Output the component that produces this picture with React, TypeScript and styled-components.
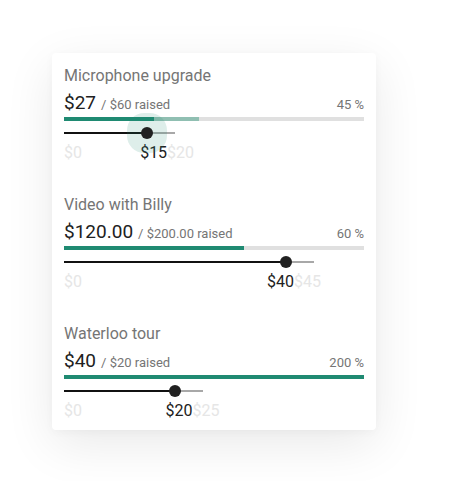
import React from "react";
import styled, { createGlobalStyle } from "styled-components";

type Goal = {
  title: string;
  raised: string;
  goal: string;
  percent: number;
  fill: number;
  buffer: number;
  value: number;
  max: number;
  focused?: boolean;
};

const goals: Goal[] = [
  { title: "Microphone upgrade", raised: "$27", goal: "$60", percent: 45, fill: 30, buffer: 45, value: 15, max: 20, focused: true },
  { title: "Video with Billy", raised: "$120.00", goal: "$200.00", percent: 60, fill: 60, buffer: 60, value: 40, max: 45 },
  { title: "Waterloo tour", raised: "$40", goal: "$20", percent: 200, fill: 100, buffer: 100, value: 20, max: 25 },
];

// px per dollar on the slider track
const SCALE = 300 / 54;

const GoalSection: React.FC<{ goal: Goal }> = ({ goal }) => {
  const trackWidth = goal.max * SCALE;
  const pos = (goal.value / goal.max) * 100;
  const labelLeft = goal.value * SCALE - goal.value * 0.48;

  return (
    <Section>
      <Title>{goal.title}</Title>
      <AmountRow>
        <span>
          <Amount>{goal.raised}</Amount>
          <Raised>/ {goal.goal} raised</Raised>
        </span>
        <Percent>{goal.percent} %</Percent>
      </AmountRow>
      <Progress>
        <ProgressBuffer style={{ width: `${goal.buffer}%` }} />
        <ProgressFill style={{ width: `${goal.fill}%` }} />
      </Progress>
      <SliderArea>
        <Track style={{ width: trackWidth }}>
          <TrackFill style={{ width: `${pos}%` }} />
          <Thumb style={{ left: `${pos}%` }} $focused={goal.focused} />
        </Track>
      </SliderArea>
      <LabelRow>
        <MinLabel>$0</MinLabel>
        <ValueLabel style={{ marginLeft: labelLeft }}>${goal.value}</ValueLabel>
        <MaxLabel>${goal.max}</MaxLabel>
      </LabelRow>
    </Section>
  );
};

export default function App() {
  return (
    <>
      <GlobalStyle />
      <Page>
        <Card>
          {goals.map((g) => (
            <GoalSection key={g.title} goal={g} />
          ))}
        </Card>
      </Page>
    </>
  );
}

// --- Styled Components ---
const GlobalStyle = createGlobalStyle`
  html, body {
    margin: 0;
    padding: 0;
    background: #ffffff;
    font-family: Roboto, "Liberation Sans", sans-serif;
  }
`;

const Page = styled.div`
  padding: 53px 0 0 52px;
  min-height: 481px;
  box-sizing: border-box;
`;

const Card = styled.div`
  width: 324px;
  box-sizing: border-box;
  padding: 13px 12px 9px;
  background: #fff;
  border-radius: 4px;
  box-shadow: 0 14px 50px rgba(0, 0, 0, 0.09), 0 2px 10px rgba(0, 0, 0, 0.03);
  display: flex;
  flex-direction: column;
  gap: 32px;
`;

const Section = styled.div`
  display: flex;
  flex-direction: column;
`;

const Title = styled.div`
  font-size: 16px;
  line-height: 20px;
  color: #757575;
`;

const AmountRow = styled.div`
  margin-top: 6px;
  height: 24px;
  display: flex;
  justify-content: space-between;
  align-items: baseline;
  font-size: 16px;
  line-height: 24px;
`;

const Amount = styled.span`
  font-size: 19px;
  line-height: 1;
  color: #212121;
`;

const Raised = styled.span`
  margin-left: 5px;
  font-size: 13px;
  line-height: 1;
  color: #757575;
`;

const Percent = styled.span`
  font-size: 13px;
  color: #757575;
`;

const Progress = styled.div`
  position: relative;
  margin-top: 1px;
  height: 4px;
  background: #e0e0e0;
  overflow: hidden;
`;

const ProgressBuffer = styled.div`
  position: absolute;
  inset: 0 auto 0 0;
  background: #90bfb2;
`;

const ProgressFill = styled.div`
  position: absolute;
  inset: 0 auto 0 0;
  background: #1f8a72;
`;

const SliderArea = styled.div`
  margin-top: 2px;
  height: 20px;
  display: flex;
  align-items: center;
`;

const Track = styled.div`
  position: relative;
  height: 2px;
  background: #a8a8a8;
`;

const TrackFill = styled.div`
  height: 2px;
  background: #111;
`;

const Thumb = styled.div<{ $focused?: boolean }>`
  position: absolute;
  top: 1px;
  width: 12px;
  height: 12px;
  border-radius: 50%;
  background: #212121;
  transform: translate(-50%, -50%);
  box-shadow: ${(p) => (p.$focused ? "0 0 0 14px rgba(31, 138, 114, 0.15)" : "none")};
`;

const LabelRow = styled.div`
  display: flex;
  height: 20px;
  font-size: 16px;
  line-height: 20px;
  white-space: nowrap;
`;

const MinLabel = styled.span`
  width: 0;
  color: #e6e6e6;
`;

const ValueLabel = styled.span`
  color: #212121;
`;

const MaxLabel = styled.span`
  color: #e6e6e6;
`;
